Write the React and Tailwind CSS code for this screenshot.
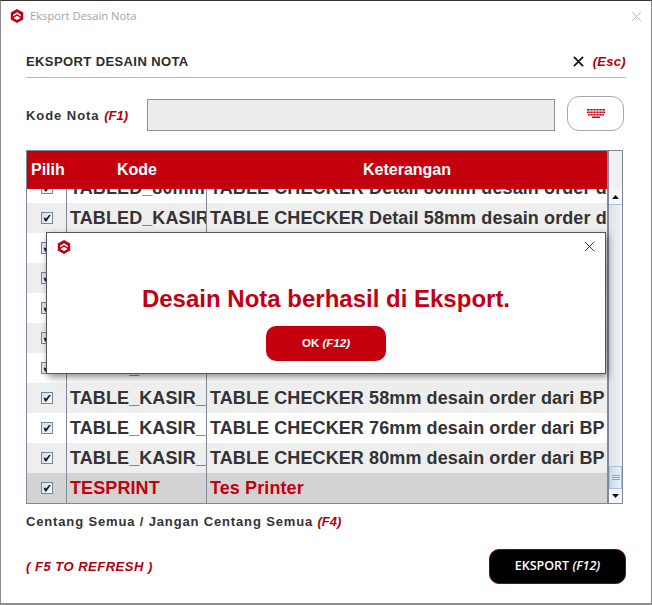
const SANS = "font-['Liberation_Sans',Arial,sans-serif]";

function Logo({ size = 14 }) {
  return (
    <svg width={size} height={size} viewBox="0 0 14 14" className="shrink-0">
      <path d="M7 0 L13.2 3.5 V10.5 L7 14 L0.8 10.5 V3.5 Z" fill="#c00013" />
      <path d="M3.2 5.8 L7 3.2 L10.8 5.8 V7.4 L7 5 L3.2 7.4 Z" fill="#fff" />
      <path d="M3.4 9 L7 6.7 L10.6 9 L7 11 Z" fill="#fff" />
    </svg>
  );
}

function Cross({ size = 12, color = "#000", width = 1 }) {
  return (
    <svg width={size} height={size} viewBox="0 0 12 12" className="shrink-0">
      <path d="M1 1 L11 11 M11 1 L1 11" stroke={color} strokeWidth={width} fill="none" />
    </svg>
  );
}

function Check() {
  return (
    <span className="flex h-[12px] w-[12px] items-center justify-center border border-[#74869c] bg-gradient-to-br from-[#d5deea] to-[#f8fafc]">
      <svg width="8" height="8" viewBox="0 0 8 8">
        <path d="M0.6 3.8 L2.8 3.8 L3 4.8 L6 1 L7.8 1 L3.4 7.4 L2 7.4 Z" fill="#141c28" />
      </svg>
    </span>
  );
}

function Row({ kode, ket, bg, red }) {
  const text = red ? "text-[#c40010]" : "text-[#333333]";
  return (
    <div className={`flex h-[30px] shrink-0 items-center text-[18px] font-bold leading-[30px] tracking-[0.1px] ${bg} ${text}`}>
      <div className="flex h-full w-[40px] shrink-0 items-center justify-center border-r border-[#7f8a99]"><Check /></div>
      <div className="h-full w-[140px] shrink-0 overflow-hidden whitespace-nowrap border-r border-[#7f8a99] pl-[3px]">{kode}</div>
      <div className="h-full min-w-0 flex-1 overflow-hidden whitespace-nowrap pl-[3px]">{ket}</div>
    </div>
  );
}

function Arrow({ up }) {
  return (
    <svg width="7" height="4" viewBox="0 0 7 4">
      <path d={up ? "M0 4 L3.5 0 L7 4 Z" : "M0 0 L3.5 4 L7 0 Z"} fill="#111" />
    </svg>
  );
}

const rows = [
  ["TABLED_80mm", "TABLE CHECKER Detail 80mm desain order d", "bg-white"],
  ["TABLED_KASIR", "TABLE CHECKER Detail 58mm desain order d", "bg-[#eeeeee]"],
  ["TABLED_76", "TABLE CHECKER Detail 76mm", "bg-white"],
  ["TABLED_80", "TABLE CHECKER Detail 80mm", "bg-[#eeeeee]"],
  ["TABLE_58mm", "TABLE CHECKER 58mm", "bg-white"],
  ["TABLE_76mm", "TABLE CHECKER 76mm", "bg-[#eeeeee]"],
  ["TABLE_80mm", "TABLE CHECKER 80mm desain order dari W", "bg-white"],
  ["TABLE_KASIR_", "TABLE CHECKER 58mm desain order dari BP", "bg-[#eeeeee]"],
  ["TABLE_KASIR_", "TABLE CHECKER 76mm desain order dari BP", "bg-white"],
  ["TABLE_KASIR_", "TABLE CHECKER 80mm desain order dari BP", "bg-[#eeeeee]"],
];

export default function App() {
  return (
    <div className={`relative flex h-[605px] w-[652px] flex-col overflow-hidden border-x border-t border-b-2 border-x-[#8c8c8c] border-t-[#333333] border-b-[#8c8c8c] bg-white ${SANS}`}>
      {/* title bar */}
      <div className="flex h-[30px] shrink-0 items-center justify-between pl-[9px] pr-[9px]">
        <div className="flex items-center gap-[6px]">
          <Logo />
          <span className="font-['Open_Sans',sans-serif] text-[11.2px] text-[#a3a3a3]">Eksport Desain Nota</span>
        </div>
        <Cross size={11} color="#b5b5b5" />
      </div>

      <div className="flex min-h-0 flex-1 flex-col pl-[25px] pr-[25px]">
        {/* heading */}
        <div className="flex h-[47px] shrink-0 items-center justify-between border-b border-[#b8b8b8] pt-[15px]">
          <span className="text-[13px] font-bold tracking-[0.4px] text-[#2b2b2b]">EKSPORT DESAIN NOTA</span>
          <span className="flex items-center gap-[9px]">
            <Cross size={11} color="#111" width={1.8} />
            <span className="text-[13px] font-bold italic tracking-[0.3px] text-[#b00010]">(Esc)</span>
          </span>
        </div>

        {/* kode nota */}
        <div className="mt-[18px] flex h-[35px] shrink-0 items-center">
          <span className="mt-[4px] w-[121px] shrink-0 text-[13px] font-bold tracking-[0.95px] text-[#333333]">
            Kode Nota <span className="italic tracking-normal text-[#b00010]">(F1)</span>
          </span>
          <div className="h-[32px] w-[408px] shrink-0 self-end border border-[#8f8f8f] bg-[#ececec]" />
          <button className="ml-[12px] flex h-[35px] w-[57px] shrink-0 items-center justify-center rounded-[12px] border border-[#a8a8a8] bg-white">
            <svg width="18" height="9" viewBox="0 0 18 9">
              <path d="M0 0 H18 V1.5 H0 Z M0 2.5 H18 V4 H0 Z M1 5 H17 V6.5 H1 Z M5 7.5 H13 V9 H5 Z" fill="#c40010" />
              <path d="M3 0 V6.5 M6 0 V6.5 M9 0 V6.5 M12 0 V6.5 M15 0 V6.5" stroke="#fff" strokeWidth="0.6" />
            </svg>
          </button>
        </div>

        {/* table */}
        <div className="mt-[19px] flex h-[354px] w-[597px] shrink-0 border border-[#7f8a99]">
          <div className="flex min-w-0 flex-1 flex-col overflow-hidden">
            <div className="relative z-10 flex h-[38px] shrink-0 items-center bg-[#c4000f] text-[16px] font-bold text-white">
              <div className="w-[40px] shrink-0 pl-[4px]">Pilih</div>
              <div className="w-[140px] shrink-0 pl-[50px]">Kode</div>
              <div className="min-w-0 flex-1 pl-[156px]">Keterangan</div>
            </div>
            <div className="-mt-[16px] flex flex-col">
              {rows.map((r, i) => (
                <Row key={i} kode={r[0]} ket={r[1]} bg={r[2]} />
              ))}
              <Row kode="TESPRINT" ket="Tes Printer" bg="bg-[#d3d3d3]" red />
            </div>
          </div>
          {/* scrollbar */}
          <div className="flex w-[15px] shrink-0 flex-col border-l-2 border-[#7f8a99] bg-gradient-to-r from-[#dde1e6] to-[#f1f3f5]">
            <div className="h-[38px] shrink-0 bg-[#eef0f2]" />
            <div className="flex h-[16px] shrink-0 items-center justify-center border-b border-[#a9bcd2] bg-[#f4f6f8]"><Arrow up /></div>
            <div className="flex-1" />
            <div className="flex h-[23px] shrink-0 flex-col items-center justify-center gap-[1px] border border-[#a9c0e0] bg-gradient-to-r from-[#c8daf2] to-[#e8f0fb]">
              <span className="h-px w-[8px] bg-[#8ba6c8]" />
              <span className="h-px w-[8px] bg-[#8ba6c8]" />
              <span className="h-px w-[8px] bg-[#8ba6c8]" />
            </div>
            <div className="flex h-[14px] shrink-0 items-center justify-center bg-[#f4f6f8]"><Arrow /></div>
          </div>
        </div>

        {/* check all */}
        <div className="mt-[10px] shrink-0 text-[13px] font-bold leading-[16px] tracking-[0.85px] text-[#333333]">
          Centang Semua / Jangan Centang Semua <span className="italic tracking-normal text-[#b00010]">(F4)</span>
        </div>

        {/* footer */}
        <div className="mt-[19px] flex shrink-0 items-center justify-between">
          <span className="mt-[1px] text-[13px] font-bold italic tracking-[0.5px] text-[#b00010]">( F5 TO REFRESH )</span>
          <button className="flex h-[35px] w-[137px] items-center justify-center rounded-[10px] border border-[#6e0d18] bg-black font-['Open_Sans',sans-serif] text-[12.5px] font-semibold text-white">
            EKSPORT&nbsp;<span className="italic">(F12)</span>
          </button>
        </div>
      </div>

      {/* message dialog */}
      <div className="absolute left-[45px] top-[231px] flex h-[142px] w-[560px] flex-col items-center border border-[#555555] bg-white shadow-[2px_3px_7px_rgba(0,0,0,0.45)]">
        <div className="flex h-[27px] w-full shrink-0 items-center justify-between pl-[10px] pr-[10px]">
          <Logo size={14} />
          <Cross size={11} color="#222" />
        </div>
        <div className="mt-[24px] text-[24px] font-bold leading-[30px] text-[#c00013]">Desain Nota berhasil di Eksport.</div>
        <button className="mt-[12px] flex h-[35px] w-[120px] items-center justify-center rounded-[10px] bg-[#c4000f] text-[11.5px] font-bold text-white">
          OK&nbsp;<span className="italic">(F12)</span>
        </button>
      </div>
    </div>
  );
}
